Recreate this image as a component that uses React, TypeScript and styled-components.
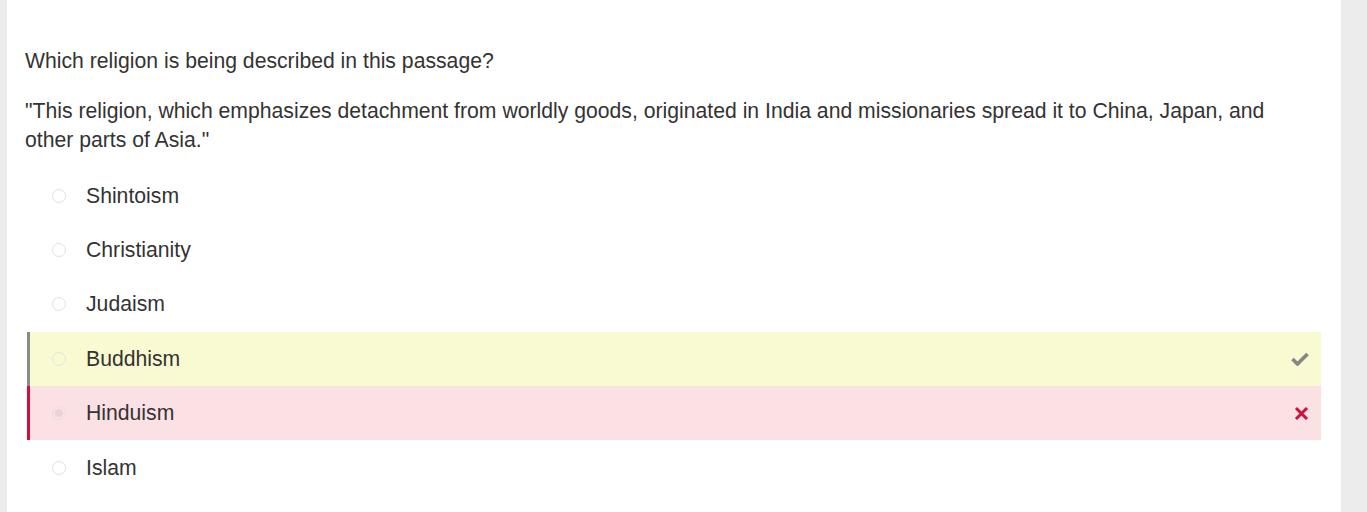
import React from 'react';
import styled, { createGlobalStyle } from 'styled-components';

const GlobalStyle = createGlobalStyle`
  html, body {
    margin: 0;
    padding: 0;
    background: #ececec;
  }
  body {
    font-family: "Liberation Sans", Arial, sans-serif;
  }
`;

const Page = styled.div`
  display: flex;
  padding: 0 26px 0 7px;
  min-height: 512px;
  box-sizing: border-box;
`;

const Card = styled.div`
  flex: 1;
  background: #fff;
  padding: 46px 20px 40px 18px;
`;

const Question = styled.p`
  margin: 0;
  font-size: 21.2px;
  line-height: 29px;
  color: #333;
`;

const Passage = styled(Question)`
  margin-top: 21px;
  padding-right: 30px;
`;

const Options = styled.div`
  display: flex;
  flex-direction: column;
  margin: 14.5px 0 0 2px;
`;

type Status = 'none' | 'correct' | 'wrong';

const Row = styled.div<{ $status: Status }>`
  display: flex;
  align-items: center;
  height: 54.4px;
  padding: 0 12px 0 22px;
  border-left: 3px solid
    ${(p) => (p.$status === 'correct' ? '#8a8a86' : p.$status === 'wrong' ? '#d0103a' : 'transparent')};
  background: ${(p) => (p.$status === 'correct' ? '#fafad2' : p.$status === 'wrong' ? '#fbe1e3' : 'transparent')};
`;

const Radio = styled.span<{ $checked: boolean }>`
  width: 14px;
  height: 14px;
  box-sizing: border-box;
  border-radius: 50%;
  border: 1px solid #e2e2e2;
  display: flex;
  align-items: center;
  justify-content: center;
  flex-shrink: 0;

  &::after {
    content: '';
    width: 8px;
    height: 8px;
    border-radius: 50%;
    background: ${(p) => (p.$checked ? '#ead3d6' : 'transparent')};
  }
`;

const Label = styled.span`
  margin-left: 20px;
  font-size: 21.2px;
  color: #333;
  flex: 1;
`;

const Mark = styled.span`
  display: flex;
  align-items: center;
`;

const CheckIcon = () => (
  <svg width="18" height="14" viewBox="0 0 18 14">
    <path d="M1.5 7 L6.5 12 L16.5 2" fill="none" stroke="#858585" strokeWidth="3.6" />
  </svg>
);

const CrossIcon = () => (
  <svg width="15" height="15" viewBox="0 0 15 15">
    <path d="M2 2 L13 13 M13 2 L2 13" fill="none" stroke="#d0103a" strokeWidth="3" />
  </svg>
);

const options: { label: string; status: Status; checked?: boolean }[] = [
  { label: 'Shintoism', status: 'none' },
  { label: 'Christianity', status: 'none' },
  { label: 'Judaism', status: 'none' },
  { label: 'Buddhism', status: 'correct' },
  { label: 'Hinduism', status: 'wrong', checked: true },
  { label: 'Islam', status: 'none' },
];

function App() {
  return (
    <>
      <GlobalStyle />
      <Page>
        <Card>
          <Question>Which religion is being described in this passage?</Question>
          <Passage>
            "This religion, which emphasizes detachment from worldly goods, originated in India and missionaries spread it to China, Japan, and other parts of Asia."
          </Passage>
          <Options>
            {options.map((o) => (
              <Row key={o.label} $status={o.status}>
                <Radio $checked={!!o.checked} />
                <Label>{o.label}</Label>
                {o.status === 'correct' && (
                  <Mark>
                    <CheckIcon />
                  </Mark>
                )}
                {o.status === 'wrong' && (
                  <Mark>
                    <CrossIcon />
                  </Mark>
                )}
              </Row>
            ))}
          </Options>
        </Card>
      </Page>
    </>
  );
}

export default App;
